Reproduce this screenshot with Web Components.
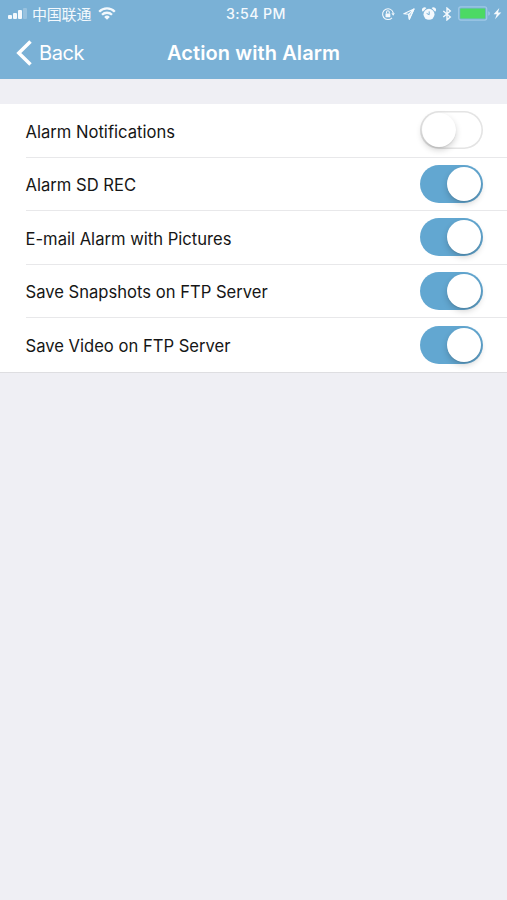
<!DOCTYPE html>
<html lang="en">
<head>
<meta charset="utf-8">
<meta name="viewport" content="width=device-width, initial-scale=1">
<title>Action with Alarm</title>
<style>
  html, body {
    margin: 0;
    height: 100%;
    overflow: hidden;
    background: #efeff4;
    font-family: Inter, "Noto Sans CJK SC", sans-serif;
  }
</style>
</head>
<body>
<alarm-screen></alarm-screen>

<script>
/**
 * Status bar: signal, carrier, clock and device indicators
 */
class StatusBar extends HTMLElement {
  constructor() {
    super();
    this.attachShadow({ mode: 'open' });
    this.render();
  }

  render() {
    this.shadowRoot.innerHTML = `
      <style>
        :host {
          display: grid;
          grid-template-columns: 1fr auto 1fr;
          align-items: center;
          height: 27px;
          box-sizing: border-box;
          padding: 0 5px 0 8px;
          color: #f4f9fd;
        }

        svg {
          display: block;
          flex-shrink: 0;
        }

        .left, .right {
          display: flex;
          align-items: center;
        }

        .right {
          justify-content: flex-end;
        }

        .carrier {
          margin: -1px 7px 0 5px;
          font: 15px/27px "Noto Sans CJK SC", sans-serif;
          letter-spacing: -0.2px;
        }

        .time {
          padding-left: 2px;
          font-size: 14.2px;
          font-weight: 550;
          letter-spacing: 0.4px;
          line-height: 27px;
        }
      </style>

      <div class="left">
        <svg width="19" height="11" viewBox="0 0 19 11" fill="currentColor">
          <rect x="0" y="7" width="4" height="4" rx="1"/>
          <rect x="5" y="5" width="4" height="6" rx="1"/>
          <rect x="10" y="2" width="4" height="9" rx="1"/>
          <rect x="15" y="0" width="4" height="11" rx="1" opacity=".25"/>
        </svg>
        <span class="carrier">中国联通</span>
        <svg width="18" height="13" viewBox="0 0 18 13" fill="none" stroke="currentColor" stroke-width="2.3">
          <path d="M1.2 4.7a11 11 0 0 1 15.6 0M4 7.8a7.1 7.1 0 0 1 10 0"/>
          <path d="M9 12.8l-2.8-2.9a4 4 0 0 1 5.6 0z" fill="currentColor" stroke="none"/>
        </svg>
      </div>

      <span class="time"><slot></slot></span>

      <div class="right">
        <!-- Rotation lock -->
        <svg width="14" height="14" viewBox="0 0 14 14" fill="none" stroke="currentColor" stroke-width="1.1">
          <path d="M11 10.8a5.4 5.4 0 1 1 1.3-4.7"/>
          <path d="M10.4 6.2h3.4l-1.6 2.5z" fill="currentColor" stroke="none"/>
          <rect x="4.5" y="6.4" width="4.8" height="3.8" rx=".4" fill="currentColor" stroke="none"/>
          <path d="M5.5 6.6V5.2a1.4 1.4 0 0 1 2.8 0v1.4"/>
        </svg>
        <!-- Location arrow -->
        <svg style="margin-left:8px" width="12" height="12" viewBox="0 0 12 12" fill="none" stroke="currentColor" stroke-width="1.1" stroke-linejoin="round">
          <path d="M11 1L.8 5.7l4.9.6.6 4.9z"/>
          <path d="M11 1L5.7 6.3l.6 4.9z" fill="currentColor" fill-opacity=".4"/>
        </svg>
        <!-- Alarm clock -->
        <svg style="margin-left:7px" width="14" height="14" viewBox="0 0 14 14" fill="currentColor">
          <circle cx="7" cy="7.3" r="5.5"/>
          <path d="M.8 4.7A2.5 2.5 0 0 1 4.4 1.1zM13.2 4.7A2.5 2.5 0 0 0 9.6 1.1z"/>
          <path d="M7.2 4.4v3.3L4.6 6.4" fill="none" stroke="#78b0d6" stroke-width="1"/>
        </svg>
        <!-- Bluetooth -->
        <svg style="margin-left:6px" width="10" height="14" viewBox="0 0 10 14" fill="none" stroke="currentColor" stroke-width="1.4">
          <path d="M1.3 4l7 6L5 12.9V1.1L8.3 4l-7 6"/>
        </svg>
        <!-- Battery, charging -->
        <svg style="margin-left:6px" width="33" height="15" viewBox="0 0 33 15">
          <rect x=".7" y=".9" width="28" height="13.2" rx="2" fill="none" stroke="#a0c8e6" stroke-width="1.2"/>
          <rect x="2.2" y="2.4" width="25" height="10.2" rx=".6" fill="#4cd964"/>
          <path d="M30.2 5.2q1.8.6 1.8 2.3t-1.8 2.3z" fill="#a0c8e6"/>
        </svg>
        <svg style="margin-left:2px" width="9" height="13" viewBox="0 0 9 13" fill="currentColor">
          <path d="M6.3 1L.6 7.2h3.2L2 12.2 8.3 5.6H5z"/>
        </svg>
      </div>
    `;
  }
}

/**
 * Navigation bar with a back button and a centered title
 */
class NavBar extends HTMLElement {
  constructor() {
    super();
    this.attachShadow({ mode: 'open' });
    this.render();
  }

  render() {
    this.shadowRoot.innerHTML = `
      <style>
        :host {
          display: grid;
          grid-template-columns: 1fr auto 1fr;
          align-items: center;
          height: 52px;
          box-sizing: border-box;
          padding: 0 16px 1px;
          color: #fff;
        }

        button {
          display: flex;
          align-items: center;
          gap: 7px;
          padding: 0;
          border: 0;
          background: none;
          color: inherit;
          font: 20px/26px Inter, sans-serif;
          letter-spacing: -0.4px;
        }

        h1 {
          margin: 0;
          font-size: 20px;
          font-weight: 600;
          line-height: 26px;
          letter-spacing: 0.1px;
        }
      </style>

      <button type="button">
        <svg width="16" height="26" viewBox="0 0 16 26" fill="none" stroke="currentColor" stroke-width="3.5">
          <path d="M14.5 1.5L2.8 13l11.7 11.5"/>
        </svg>
        <slot name="back"></slot>
      </button>
      <h1><slot></slot></h1>
    `;
  }
}

/**
 * On/off switch, toggled through its "on" attribute
 */
class ToggleSwitch extends HTMLElement {
  constructor() {
    super();
    this.attachShadow({ mode: 'open' });
    this.render();
    this.addEventListener('click', () => this.toggleAttribute('on'));
  }

  render() {
    this.shadowRoot.innerHTML = `
      <style>
        :host {
          display: flex;
          align-items: center;
          flex-shrink: 0;
          width: 63px;
          height: 38px;
          box-sizing: border-box;
          padding: 0 2px;
          border-radius: 19px;
          background: #fff;
          box-shadow: inset 0 0 0 1.6px #e4e4e4;
        }

        :host([on]) {
          justify-content: flex-end;
          background: #62a7d1;
          box-shadow: none;
        }

        .knob {
          width: 34px;
          height: 34px;
          border-radius: 50%;
          background: #fff;
          box-shadow: 0 3px 6px rgba(0, 0, 0, 0.18), 0 1px 1px rgba(0, 0, 0, 0.08);
        }
      </style>
      <div class="knob"></div>
    `;
  }
}

/**
 * One settings row: label on the left, control on the right
 */
class SettingRow extends HTMLElement {
  constructor() {
    super();
    this.attachShadow({ mode: 'open' });
    this.render();
  }

  render() {
    this.shadowRoot.innerHTML = `
      <style>
        :host {
          display: flex;
          align-items: center;
          justify-content: space-between;
          flex: 1;
          box-sizing: border-box;
          margin-left: 25.5px;
          padding-right: 24px;
          border-bottom: 1px solid #e8e8ea;
          color: #161616;
          font-size: 16.6px;
          line-height: 24px;
        }

        :host(:last-of-type) {
          border-bottom-color: transparent;
        }

        .label {
          padding-top: 2.6px;
          white-space: nowrap;
        }
      </style>
      <span class="label"><slot></slot></span>
      <slot name="control"></slot>
    `;
  }
}

/**
 * Full screen: header bars and the list of alarm actions
 */
class AlarmScreen extends HTMLElement {
  constructor() {
    super();
    this.attachShadow({ mode: 'open' });
    this.render();
  }

  render() {
    this.shadowRoot.innerHTML = `
      <style>
        :host {
          display: block;
          height: 100vh;
          background: #efeff4;
        }

        header {
          background: #7ab1d6;
        }

        main {
          display: flex;
          flex-direction: column;
          height: 269px;
          box-sizing: border-box;
          margin-top: 25px;
          background: #fff;
          border-bottom: 1px solid #dedee1;
        }
      </style>

      <header>
        <status-bar>3:54 PM</status-bar>
        <nav-bar><span slot="back">Back</span>Action with Alarm</nav-bar>
      </header>
      <main>
        <setting-row>Alarm Notifications<toggle-switch slot="control"></toggle-switch></setting-row>
        <setting-row>Alarm SD REC<toggle-switch slot="control" on></toggle-switch></setting-row>
        <setting-row>E-mail Alarm with Pictures<toggle-switch slot="control" on></toggle-switch></setting-row>
        <setting-row>Save Snapshots on FTP Server<toggle-switch slot="control" on></toggle-switch></setting-row>
        <setting-row>Save Video on FTP Server<toggle-switch slot="control" on></toggle-switch></setting-row>
      </main>
    `;
  }
}

// Register the components
customElements.define('status-bar', StatusBar);
customElements.define('nav-bar', NavBar);
customElements.define('toggle-switch', ToggleSwitch);
customElements.define('setting-row', SettingRow);
customElements.define('alarm-screen', AlarmScreen);
</script>
</body>
</html>
